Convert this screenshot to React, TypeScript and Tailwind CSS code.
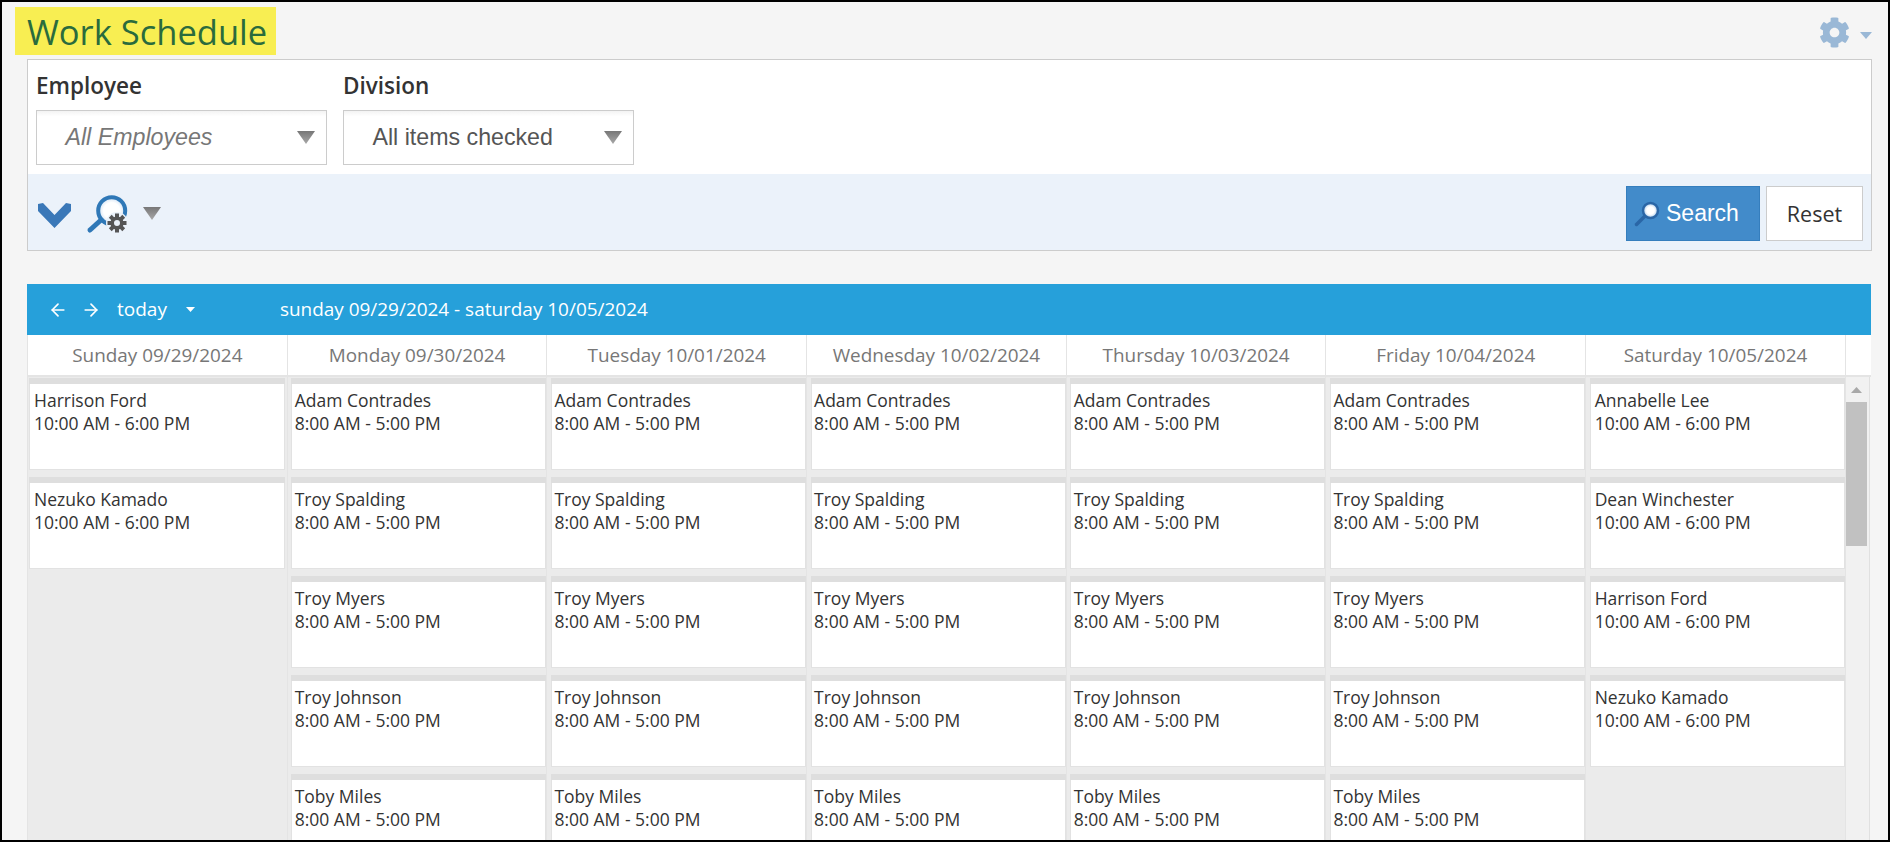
import { ArrowLeft, ArrowRight } from "lucide-react";
import { FaCog } from "react-icons/fa";

const weekdayStaff = ["Adam Contrades", "Troy Spalding", "Troy Myers", "Troy Johnson", "Toby Miles"];
const late = "10:00 AM - 6:00 PM";
const early = "8:00 AM - 5:00 PM";

const days = [
  { label: "Sunday 09/29/2024", names: ["Harrison Ford", "Nezuko Kamado"], hours: late },
  { label: "Monday 09/30/2024", names: weekdayStaff, hours: early },
  { label: "Tuesday 10/01/2024", names: weekdayStaff, hours: early },
  { label: "Wednesday 10/02/2024", names: weekdayStaff, hours: early },
  { label: "Thursday 10/03/2024", names: weekdayStaff, hours: early },
  { label: "Friday 10/04/2024", names: weekdayStaff, hours: early },
  { label: "Saturday 10/05/2024", names: ["Annabelle Lee", "Dean Winchester", "Harrison Ford", "Nezuko Kamado"], hours: late },
];

const Caret = ({ id }: { id: string }) => (
  <svg width="18" height="13" viewBox="0 0 18 13" className="shrink-0">
    <defs>
      <linearGradient id={id} x1="0" y1="0" x2="0" y2="1">
        <stop offset="0" stopColor="#777777" />
        <stop offset="1" stopColor="#a8a8a8" />
      </linearGradient>
    </defs>
    <polygon points="0,0 18,0 9,13" fill={`url(#${id})`} />
  </svg>
);

const FilterSelect = ({ text, italic, id }: { text: string; italic?: boolean; id: string }) => (
  <div className="flex h-[55px] w-[291px] items-center justify-between border border-[#cccccc] bg-gradient-to-b from-[#f3f3f3] to-white to-[10%] pl-[28.5px] pr-[11px] font-['Liberation_Sans',sans-serif] text-[23.2px]">
    <span className={italic ? "italic text-[#777777]" : "text-[#555555]"}>{text}</span>
    <Caret id={id} />
  </div>
);

const SearchOptionsIcon = () => (
  <svg width="42" height="42" viewBox="0 0 42 42" className="ml-[15px] mt-[4px] shrink-0">
    <defs>
      <radialGradient id="lens">
        <stop offset="0.6" stopColor="#ffffff" />
        <stop offset="1" stopColor="#cfe0f2" />
      </radialGradient>
    </defs>
    <circle cx="25.7" cy="17.7" r="13.5" fill="url(#lens)" stroke="#2f78b7" strokeWidth="4" />
    <line x1="15" y1="27" x2="4" y2="37" stroke="#2f78b7" strokeWidth="5" strokeLinecap="round" />
    <circle cx="31" cy="30" r="11" fill="#ebf2fa" />
    <g fill="#555555">
      {[0, 45, 90, 135, 180, 225, 270, 315].map((a) => (
        <rect key={a} x="29" y="20.5" width="4" height="5" transform={`rotate(${a} 31 30)`} />
      ))}
    </g>
    <circle cx="31" cy="30" r="4.8" fill="none" stroke="#555555" strokeWidth="3.6" />
  </svg>
);

const SearchIcon = () => (
  <svg width="26" height="26" viewBox="0 0 26 26" className="shrink-0">
    <defs>
      <radialGradient id="glass">
        <stop offset="0.5" stopColor="#ffffff" />
        <stop offset="1" stopColor="#a8c8e8" />
      </radialGradient>
    </defs>
    <circle cx="16.5" cy="9.5" r="7.5" fill="url(#glass)" stroke="#2a66a6" strokeWidth="2.5" />
    <line x1="10.5" y1="15.5" x2="2.5" y2="23.5" stroke="#2a66a6" strokeWidth="3.5" strokeLinecap="round" />
  </svg>
);

const ShiftCard = ({ name, hours }: { name: string; hours: string }) => (
  <div className="mb-[7px]">
    <div className="h-[6px] bg-[#dedede]" />
    <div className="h-[86px] border-x border-b border-[#e2e2e2] bg-white pl-[2.5px] pt-[5px] text-[17.5px] leading-[23px] text-[#333333] group-first:pl-[4px] group-last:pl-[4px]">
      <div>{name}</div>
      <div>{hours}</div>
    </div>
  </div>
);

export default function App() {
  return (
    <div className="box-border flex h-[842px] w-[1890px] flex-col overflow-hidden border-2 border-black bg-[#f5f5f5] font-['Open_Sans',sans-serif]">
      {/* Title row */}
      <div className="flex h-[57px] shrink-0 items-start justify-between pl-[13px] pr-[16px]">
        <div className="mt-[5px] flex h-[48px] w-[261px] items-center bg-[#f8ee52] pl-[12px] pt-[2px] text-[34.5px] font-medium text-[#2a6b3d]">
          Work Schedule
        </div>
        <div className="mt-[15px] flex items-center">
          <FaCog size={31} color="#9ab8d6" />
          <svg width="12" height="7" viewBox="0 0 12 7" className="ml-[10px] mt-[5px]">
            <polygon points="0,0 12,0 6,7" fill="#9ab8d6" />
          </svg>
        </div>
      </div>

      {/* Filter panel */}
      <div className="ml-[25px] h-[192px] w-[1845px] shrink-0 border border-[#cccccc] bg-white">
        <div className="flex h-[114px] gap-[16px] pl-[8px]">
          <div>
            <div className="mt-[10px] h-[40px] text-[22.5px] font-semibold leading-[32px] text-[#333333]">Employee</div>
            <FilterSelect text="All Employees" italic id="caret-employee" />
          </div>
          <div>
            <div className="mt-[10px] h-[40px] text-[22.5px] font-semibold leading-[32px] text-[#333333]">Division</div>
            <FilterSelect text="All items checked" id="caret-division" />
          </div>
        </div>
        <div className="flex h-[76px] items-center bg-[#ebf2fa] pr-[8px]">
          <svg width="33" height="25" viewBox="0 0 33 25" className="ml-[10px] mt-[7px] shrink-0">
            <polygon points="0,1 5,0 16.5,12 28,0 33,1 33,8 16.5,25 0,8" fill="#3a78b8" />
          </svg>
          <SearchOptionsIcon />
          <div className="ml-[15px] mt-[2px]">
            <Caret id="caret-search" />
          </div>
          <button className="ml-auto mt-[3px] flex h-[55px] w-[134px] items-center border border-[#357ebd] bg-[#428bca] pl-[7px] font-['Liberation_Sans',sans-serif] text-[23px] text-white">
            <SearchIcon />
            <span className="ml-[6px]">Search</span>
          </button>
          <button className="ml-[6px] mt-[3px] h-[55px] w-[97px] border border-[#cccccc] bg-white pt-[1px] text-[21.5px] text-[#333333]">
            Reset
          </button>
        </div>
      </div>

      {/* Calendar */}
      <div className="ml-[25px] mt-[33px] flex min-h-0 w-[1844px] flex-1 flex-col">
        <div className="flex h-[51px] shrink-0 items-center bg-[#26a0da] pl-[20.5px] text-[19px] text-white">
          <ArrowLeft size={20} />
          <ArrowRight size={20} className="ml-[13px]" />
          <span className="ml-[16.5px]">today</span>
          <svg width="9" height="5" viewBox="0 0 9 5" className="ml-[19px]">
            <polygon points="0,0 9,0 4.5,5" fill="#ffffff" />
          </svg>
          <span className="ml-[85px] text-[18.95px]">sunday 09/29/2024 - saturday 10/05/2024</span>
        </div>

        <div className="grid h-[42px] shrink-0 grid-cols-[repeat(7,259.7px)_1fr] border-b-2 border-l border-[#e4e4e4] bg-white">
          {days.map((day) => (
            <div key={day.label} className="flex items-center justify-center border-r border-[#e4e4e4] text-[18.9px] text-[#777777]">
              {day.label}
            </div>
          ))}
          <div />
        </div>

        <div className="flex min-h-0 flex-1 overflow-hidden border-l border-[#e4e4e4]">
          <div className="grid grid-cols-[repeat(7,259.7px)]">
            {days.map((day) => (
              <div key={day.label} className="group border-r border-[#e4e4e4] bg-[#ebebeb] pl-[3.5px] pt-[1px] first:pl-[1px] first:pr-[1.5px]">
                {day.names.map((name) => (
                  <ShiftCard key={name} name={name} hours={day.hours} />
                ))}
              </div>
            ))}
          </div>
          <div className="flex w-[24px] shrink-0 flex-col border-r border-[#e0e0e0] bg-[#f1f1f1]">
            <svg width="11" height="6" viewBox="0 0 11 6" className="ml-[5px] mt-[10px]">
              <polygon points="5.5,0 11,6 0,6" fill="#a8a8a8" />
            </svg>
            <div className="mt-[9px] h-[144px] w-[21px] bg-[#c1c1c1]" />
          </div>
        </div>
      </div>
    </div>
  );
}
